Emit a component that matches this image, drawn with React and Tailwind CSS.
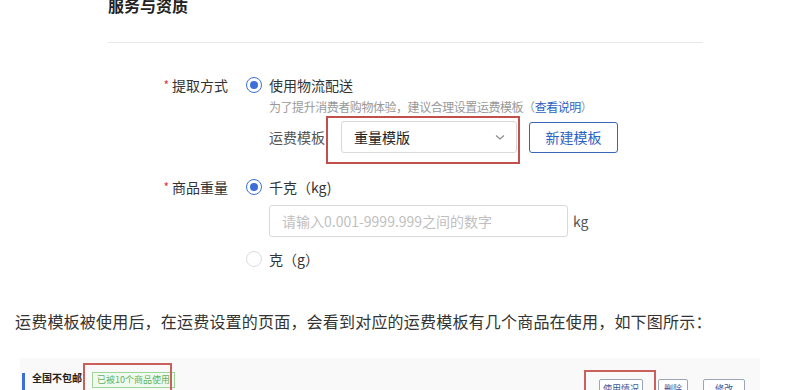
import React from 'react';

const Radio = ({ checked }) => (
  <span
    className={`flex h-[16px] w-[16px] items-center justify-center rounded-full border bg-white ${
      checked ? 'border-[#3d6fd6]' : 'border-[#dcdcdc]'
    }`}
  >
    {checked && <span className="h-[8px] w-[8px] rounded-full bg-[#3d6fd6]"></span>}
  </span>
);

const FormRow = ({ label, children, className = '' }) => (
  <div className={`flex ${className}`}>
    <div className="flex h-[20px] w-[120px] items-center justify-end text-[14px] text-[#333]">
      <span className="mr-[3px] text-[12px] text-[#e0383e]">*</span>
      {label}
    </div>
    <div className="pl-[18px]">{children}</div>
  </div>
);

const App = () => {
  return (
    <div
      className="relative h-[390px] w-[787px] overflow-hidden bg-white"
      style={{ fontFamily: '"Noto Sans CJK SC", "Noto Sans", sans-serif' }}
    >
      <div className="ml-[108px] w-[595px]">
        <div className="-mt-[7px] h-[24px] text-[16px] font-bold leading-[24px] text-[#222]">服务与资质</div>
        <div className="mt-[25px] h-px bg-[#e8e8e8]"></div>

        <FormRow label="提取方式" className="mt-[32px]">
          <div className="flex h-[20px] items-center gap-[7px]">
            <Radio checked />
            <span className="text-[14px] text-[#333]">使用物流配送</span>
          </div>
          <div className="ml-[23px] mt-[4px] text-[12px] leading-[16px] tracking-[-0.45px] text-[#999]">
            为了提升消费者购物体验，建议合理设置运费模板（<span className="text-[#2c62c4]">查看说明</span>）
          </div>
          <div className="ml-[23px] mt-[6px] flex items-center">
            <span className="text-[14px] text-[#555]">运费模板</span>
            <div className="relative ml-[16px]">
              <div className="flex h-[32px] w-[176px] items-center justify-between rounded-[3px] border border-[#d9d9d9] bg-white pl-[12px] pr-[10px]">
                <span className="text-[14px] text-[#222]">重量模版</span>
                <svg width="12" height="12" viewBox="0 0 12 12" fill="none">
                  <path d="M2 4.5 L6 8 L10 4.5" stroke="#888" strokeWidth="1.1" />
                </svg>
              </div>
              <div className="pointer-events-none absolute -left-[15px] -top-[5px] h-[48px] w-[194px] border-2 border-[#c24f4b]"></div>
            </div>
            <div className="ml-[12px] flex h-[31px] w-[89px] items-center justify-center rounded-[3px] border border-[#3a66b8] text-[14px] text-[#2c62c4]">
              新建模板
            </div>
          </div>
        </FormRow>

        <FormRow label="商品重量" className="mt-[24px]">
          <div className="flex h-[20px] items-center gap-[7px]">
            <Radio checked />
            <span className="text-[14px] text-[#333]">千克（kg)</span>
          </div>
          <div className="ml-[23px] mt-[8px] flex items-center">
            <div className="flex h-[32px] w-[299px] items-center rounded-[3px] border border-[#d9d9d9] pl-[12px] text-[14px] text-[#bfbfbf]">
              请输入0.001-9999.999之间的数字
            </div>
            <span className="ml-[5px] text-[14px] text-[#555]">kg</span>
          </div>
          <div className="mt-[12px] flex h-[20px] items-center gap-[7px]">
            <Radio />
            <span className="text-[14px] text-[#333]">克（g）</span>
          </div>
        </FormRow>
      </div>

      <p className="ml-[15px] mt-[40px] text-[16px] leading-[24px] tracking-[0.2px] text-[#333]">
        运费模板被使用后，在运费设置的页面，会看到对应的运费模板有几个商品在使用，如下图所示：
      </p>

      <div className="ml-[20px] mt-[25px] h-[40px] w-[740px] bg-[#f8f9f8] pt-[14px]">
        <div className="flex items-start">
          <div className="ml-[2px] mt-[1px] h-[30px] w-[3px] bg-[#3c6fd6]"></div>
          <span className="ml-[7px] -mt-[1px] text-[10px] font-bold leading-[14px] text-[#222]">全国不包邮</span>
          <div className="relative ml-[10px]">
            <span className="block h-[16px] border border-[#9fd49a] bg-[#f1faf0] px-[4px] text-[9px] leading-[14px] text-[#5fb35a]">
              已被10个商品使用
            </span>
            <div className="pointer-events-none absolute -left-[9px] -top-[9px] h-[40px] w-[89px] border-2 border-[#c9605c]"></div>
          </div>
          <div className="ml-auto mr-[15px] mt-[7px] flex gap-[15px]">
            <div className="relative">
              <span className="block h-[20px] w-[44px] rounded-[2px] border border-[#9aa6b8] bg-white text-center text-[9px] leading-[18px] text-[#3c5a99]">
                使用情况
              </span>
              <div className="pointer-events-none absolute -left-[15px] -top-[9px] h-[40px] w-[72px] border-2 border-[#c9605c]"></div>
            </div>
            <span className="block h-[20px] w-[30px] rounded-[2px] border border-[#9aa6b8] bg-white text-center text-[9px] leading-[18px] text-[#3c5a99]">
              删除
            </span>
            <span className="block h-[20px] w-[42px] rounded-[2px] border border-[#9aa6b8] bg-white text-center text-[9px] leading-[18px] text-[#3c5a99]">
              修改
            </span>
          </div>
        </div>
      </div>
    </div>
  );
};

export default App;
